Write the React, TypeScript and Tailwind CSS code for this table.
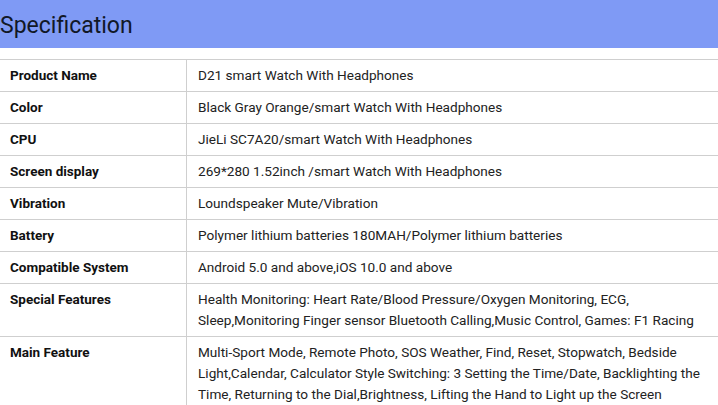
const specs: { label: string; value: string }[] = [
  { label: 'Product Name', value: 'D21 smart Watch With Headphones' },
  { label: 'Color', value: 'Black Gray Orange/smart Watch With Headphones' },
  { label: 'CPU', value: 'JieLi SC7A20/smart Watch With Headphones' },
  { label: 'Screen display', value: '269*280 1.52inch /smart Watch With Headphones' },
  { label: 'Vibration', value: 'Loundspeaker Mute/Vibration' },
  { label: 'Battery', value: 'Polymer lithium batteries 180MAH/Polymer lithium batteries' },
  { label: 'Compatible System', value: 'Android 5.0 and above,iOS 10.0 and above' },
  {
    label: 'Special Features',
    value:
      'Health Monitoring: Heart Rate/Blood Pressure/Oxygen Monitoring, ECG, Sleep,Monitoring Finger sensor Bluetooth Calling,Music Control, Games: F1 Racing',
  },
  {
    label: 'Main Feature',
    value:
      'Multi-Sport Mode, Remote Photo, SOS Weather, Find, Reset, Stopwatch, Bedside Light,Calendar, Calculator Style Switching: 3 Setting the Time/Date, Backlighting the Time, Returning to the Dial,Brightness, Lifting the Hand to Light up the Screen',
  },
];

export default function App() {
  return (
    <div className="w-[718px] h-[405px] overflow-hidden bg-white font-['Roboto',sans-serif]">
      <div className="h-12 bg-[#7f9af5] flex items-center">
        <h2 className="text-[23px] leading-none text-[#111827] pt-[3px]">Specification</h2>
      </div>

      <div className="mt-[11px] w-[740px] -ml-px border-t border-l border-[#cfcfcf]">
        {specs.map((row) => (
          <div key={row.label} className="grid grid-cols-[187px_1fr] border-b border-[#cfcfcf]">
            <div className="border-r border-[#cfcfcf] px-[10px] py-[5px] text-[13.5px] leading-[21px] font-bold text-[#111]">
              {row.label}
            </div>
            <div className="pl-[11px] pr-[30px] py-[5px] text-[13.6px] leading-[21px] text-[#222]">
              {row.value}
            </div>
          </div>
        ))}
      </div>
    </div>
  );
}
